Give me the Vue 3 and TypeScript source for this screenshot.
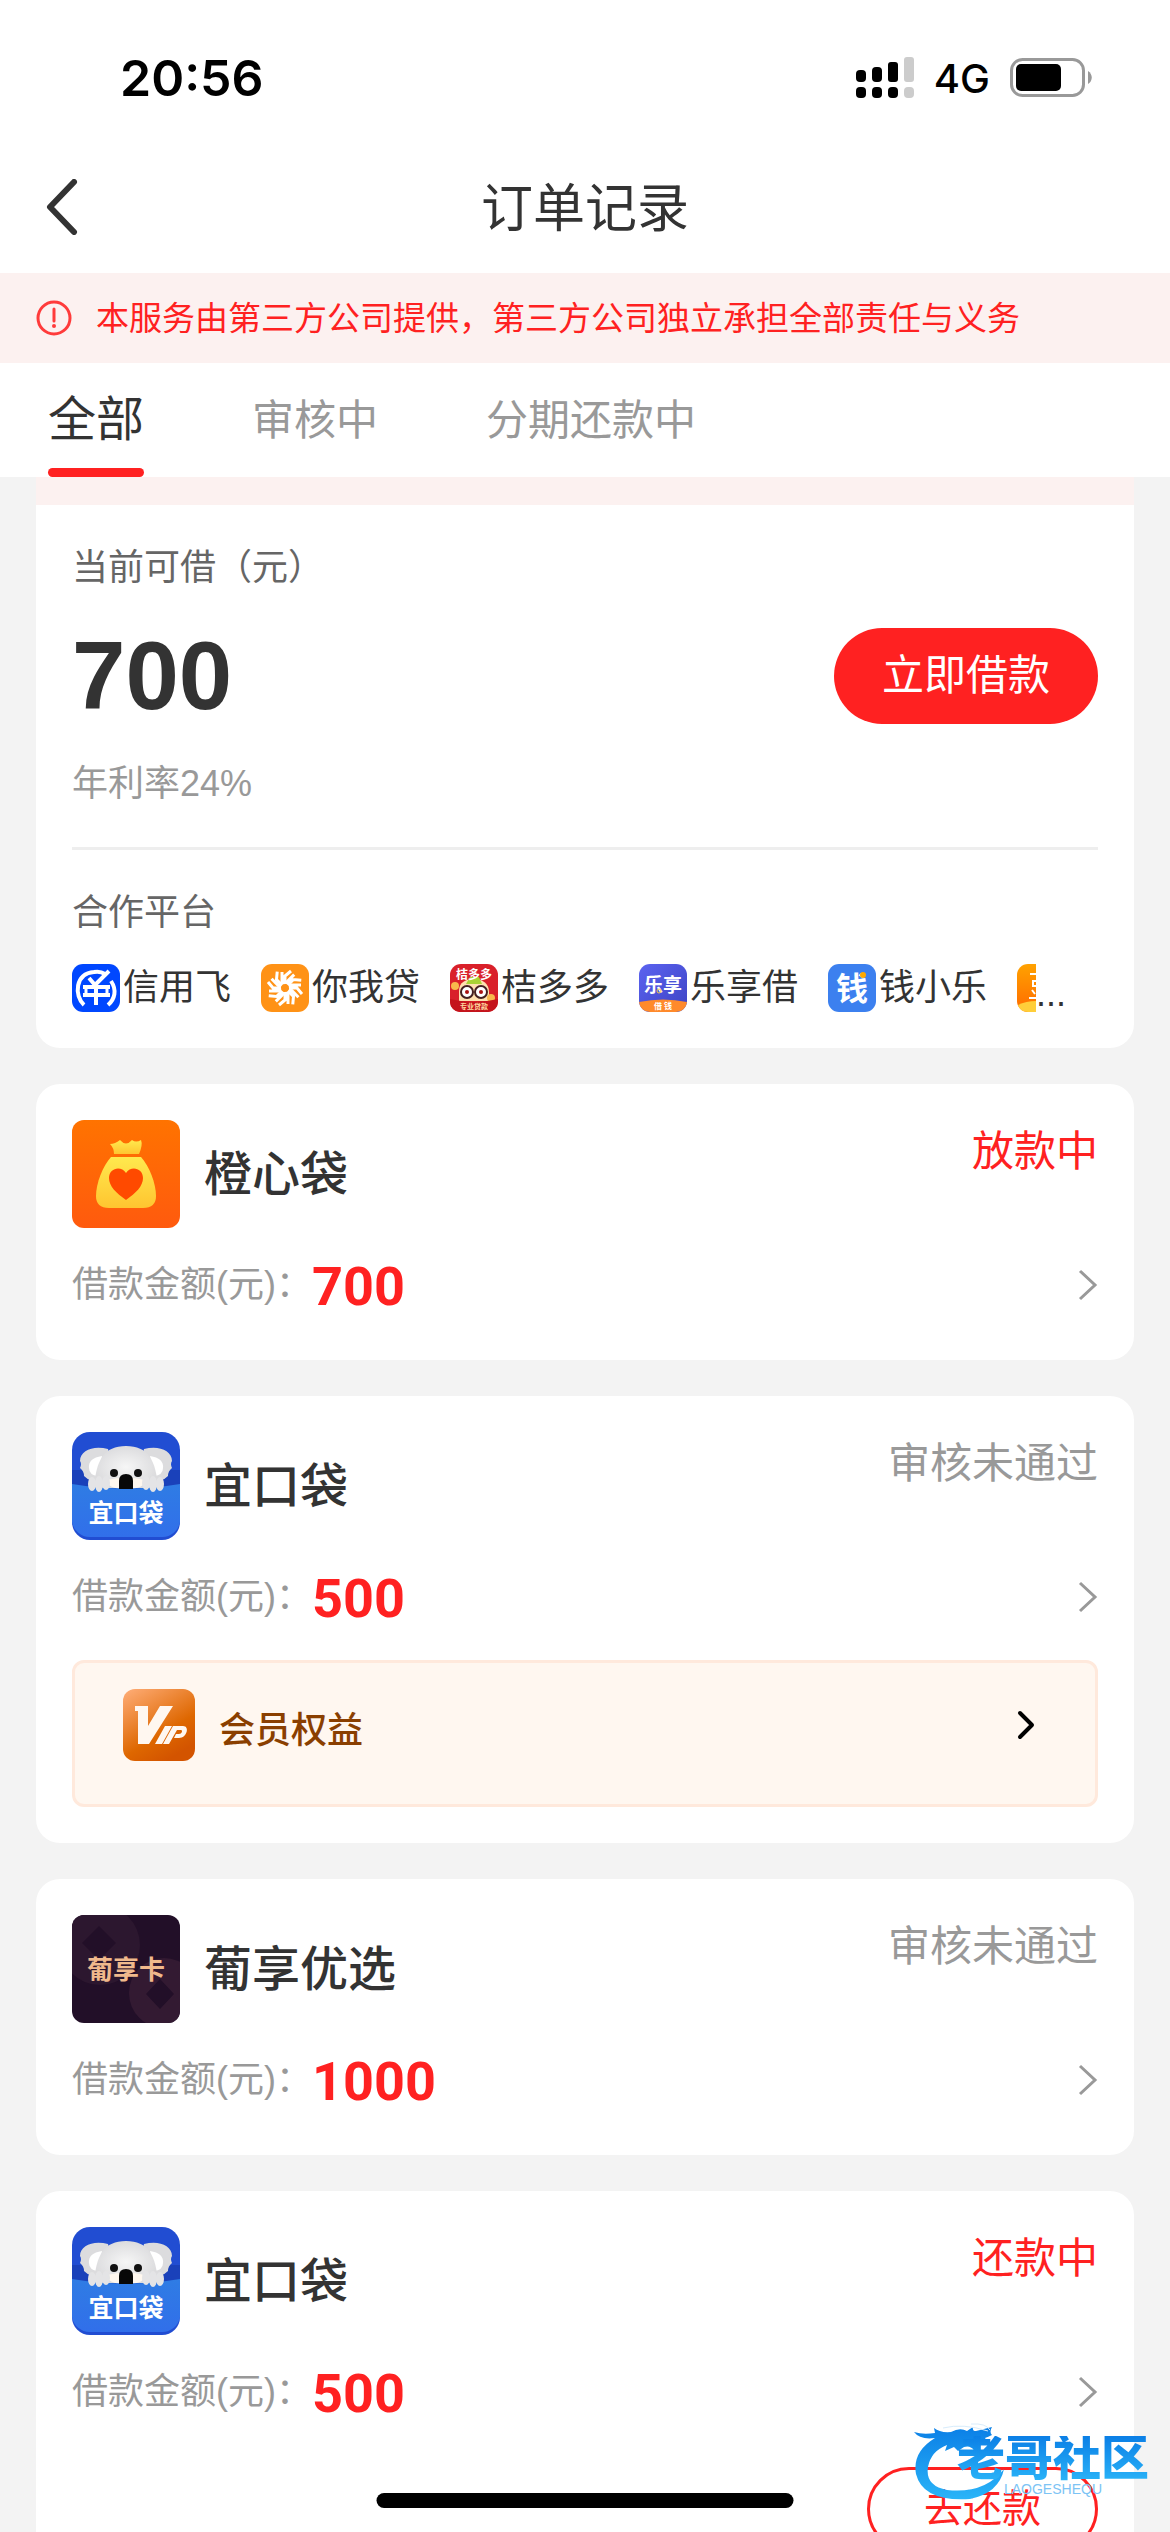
<script setup lang="ts">
import { ref } from 'vue'

type OrderIcon = 'orange' | 'koala' | 'card'

interface Order {
  id: number
  icon: OrderIcon
  name: string
  status: string
  active: boolean
  amount: string
  vip?: boolean
  repay?: boolean
}

interface Partner {
  id: string
  name: string
}

const tabs: string[] = ['全部', '审核中', '分期还款中']
const current = ref<number>(0)

const partners: Partner[] = [
  { id: 'xyf', name: '信用飞' },
  { id: 'nwd', name: '你我贷' },
  { id: 'jdd', name: '桔多多' },
  { id: 'lxj', name: '乐享借' },
  { id: 'qxl', name: '钱小乐' },
]

const orders: Order[] = [
  { id: 1, icon: 'orange', name: '橙心袋', status: '放款中', active: true, amount: '700' },
  { id: 2, icon: 'koala', name: '宜口袋', status: '审核未通过', active: false, amount: '500', vip: true },
  { id: 3, icon: 'card', name: '葡享优选', status: '审核未通过', active: false, amount: '1000' },
  { id: 4, icon: 'koala', name: '宜口袋', status: '还款中', active: true, amount: '500', repay: true },
]

const petals: number[] = [0, 45, 90, 135, 180, 225, 270, 315]
</script>

<template>
  <div class="screen">
    <header class="top">
      <div class="status-bar">
        <span class="time">20:56</span>
        <div class="status-right">
          <svg class="signal" viewBox="0 0 58 42">
            <rect x="0" y="13" width="10" height="12" rx="4" />
            <rect x="16" y="10" width="10" height="15" rx="4" />
            <rect x="32" y="5" width="10" height="20" rx="3" />
            <rect x="48" y="0" width="10" height="25" rx="3" fill="#ccc" />
            <rect x="0" y="30" width="10" height="11" rx="4" />
            <rect x="16" y="30" width="10" height="11" rx="4" />
            <rect x="32" y="30" width="10" height="11" rx="4" />
            <rect x="48" y="30" width="10" height="11" rx="4" fill="#ccc" />
          </svg>
          <span class="network">4G</span>
          <svg class="battery" viewBox="0 0 82 40">
            <rect x="1.5" y="1.5" width="72" height="36" rx="11" fill="none" stroke="#999" stroke-width="3" />
            <rect x="6" y="6" width="45" height="27" rx="5" />
            <path d="M78 13c5 3 5 10 0 13z" fill="#999" />
          </svg>
        </div>
      </div>
      <nav class="nav">
        <button class="back" type="button" aria-label="返回">
          <svg viewBox="0 0 32 56"><path d="M28 3 4 28l24 25" fill="none" stroke="#333" stroke-width="6" stroke-linecap="round" stroke-linejoin="round" /></svg>
        </button>
        <h1>订单记录</h1>
      </nav>
      <p class="notice">
        <svg viewBox="0 0 36 36">
          <circle cx="18" cy="18" r="16" fill="none" stroke="#ff3b3b" stroke-width="3" />
          <path d="M18 9v12" stroke="#ff3b3b" stroke-width="3" stroke-linecap="round" />
          <circle cx="18" cy="26" r="2" fill="#ff3b3b" />
        </svg>
        <span>本服务由第三方公司提供，第三方公司独立承担全部责任与义务</span>
      </p>
      <div class="tabs" role="tablist">
        <button
          v-for="(tab, i) in tabs"
          :key="tab"
          type="button"
          role="tab"
          class="tab"
          :class="{ on: current === i }"
          :aria-selected="current === i"
          @click="current = i"
        >{{ tab }}</button>
      </div>
    </header>

    <main class="list">
      <section class="quota">
        <div class="strip"></div>
        <div class="quota-body">
          <p class="label">当前可借（元）</p>
          <div class="quota-row">
            <strong>700</strong>
            <button class="borrow" type="button">立即借款</button>
          </div>
          <p class="rate">年利率24%</p>
          <hr />
          <p class="label">合作平台</p>
          <ul class="partners">
            <li v-for="p in partners" :key="p.id">
              <svg v-if="p.id === 'xyf'" class="mini" viewBox="0 0 48 48">
                <rect width="48" height="48" rx="11" fill="#0047ff" />
                <path d="M12 41C2 32 3 9 22 8c5-1 8 0 11 2M39 17c6 9 4 18-3 24" fill="none" stroke="#fff" stroke-width="4" />
                <path d="M17 14l6 7L37 7" fill="none" stroke="#fff" stroke-width="4" />
                <path d="M11 23h27M11 31h27M24 20v21" fill="none" stroke="#fff" stroke-width="4" />
                <path d="M14 23v8M35 23v8" fill="none" stroke="#fff" stroke-width="3" />
              </svg>
              <svg v-else-if="p.id === 'nwd'" class="mini" viewBox="0 0 48 48">
                <rect width="48" height="48" rx="11" fill="#ff9216" />
                <g fill="none" stroke="#fff" stroke-width="3">
                  <path v-for="a in petals" :key="a" :transform="`rotate(${a} 24 24)`" d="M21 18V8M24 18v-6l6-5M20 19l8-1" />
                </g>
              </svg>
              <svg v-else-if="p.id === 'jdd'" class="mini" viewBox="0 0 48 48">
                <rect width="48" height="48" rx="11" fill="#d9202a" />
                <path d="M9 37V27C9 18 16 15 24 15s15 4 15 13v9z" fill="#ffe1b0" />
                <path d="M16 20l4-7h9l3 7z" fill="#a9d335" />
                <circle cx="5" cy="22" r="4" fill="#f8b84c" /><circle cx="41" cy="34" r="4" fill="#f8b84c" />
                <circle cx="17" cy="28" r="6" fill="#fff" stroke="#442021" stroke-width="2" />
                <circle cx="31" cy="28" r="6" fill="#fff" stroke="#442021" stroke-width="2" />
                <circle cx="17" cy="28" r="2" fill="#a11" /><circle cx="31" cy="28" r="2" fill="#a11" />
                <path d="M0 35q24 6 48 0v3a10 10 0 0 1-10 10H10A10 10 0 0 1 0 38z" fill="#c4141c" />
                <text x="24" y="15" font-size="12" font-weight="700" fill="#fff" text-anchor="middle">桔多多</text>
                <text x="24" y="45" font-size="7" font-weight="700" fill="#ffd9a0" text-anchor="middle">专业贷款</text>
              </svg>
              <svg v-else-if="p.id === 'lxj'" class="mini" viewBox="0 0 48 48">
                <defs>
                  <linearGradient id="lxj-bg" x2="1" y2="1"><stop stop-color="#5b63f0" /><stop offset="1" stop-color="#3d43c4" /></linearGradient>
                </defs>
                <rect width="48" height="48" rx="11" fill="url(#lxj-bg)" />
                <path d="M0 38q24-5 48 0a11 11 0 0 1-11 10H11A11 11 0 0 1 0 38z" fill="#ff8a2b" />
                <text x="24" y="28" font-size="19" font-weight="700" fill="#fff" text-anchor="middle">乐享</text>
                <text x="24" y="45" font-size="8" font-weight="700" fill="#fff" text-anchor="middle">借 钱</text>
                <circle cx="20" cy="27" r="2" fill="none" stroke="#f7c948" stroke-width="1" />
              </svg>
              <svg v-else class="mini" viewBox="0 0 48 48">
                <rect width="48" height="48" rx="11" fill="#3c80ef" />
                <text x="24" y="36" font-size="32" font-weight="700" fill="#fff" text-anchor="middle">钱</text>
                <circle cx="35" cy="11" r="3" fill="#ffa800" />
              </svg>
              <span>{{ p.name }}</span>
            </li>
            <li class="more">
              <svg class="cut" viewBox="0 0 19 48">
                <defs>
                  <linearGradient id="cut-bg" x2="0" y2="1"><stop stop-color="#ffa200" /><stop offset="1" stop-color="#ff6a00" /></linearGradient>
                </defs>
                <path d="M19 0h-8A11 11 0 0 0 0 11v26a11 11 0 0 0 11 11h8z" fill="url(#cut-bg)" />
                <path d="M1 41q8-4 18-4v11h-8Q3 48 1 41z" fill="#ffce3a" />
                <path d="M13 10h6M19 17h-3v5h3M15 26l3 4M12 34h7" fill="none" stroke="#fff" stroke-width="2" />
              </svg>
              <span class="dots">...</span>
            </li>
          </ul>
        </div>
      </section>

      <article v-for="order in orders" :key="order.id" class="order">
        <div class="order-head">
          <svg v-if="order.icon === 'orange'" class="logo" viewBox="0 0 108 108">
            <defs>
              <linearGradient id="orange-bg" x2="0" y2="1"><stop stop-color="#ff7300" /><stop offset="1" stop-color="#ff5a0e" /></linearGradient>
              <linearGradient id="bag" x2="0" y2="1"><stop stop-color="#ffe94e" /><stop offset="1" stop-color="#ffc530" /></linearGradient>
            </defs>
            <rect width="108" height="108" rx="12" fill="url(#orange-bg)" />
            <path d="M38 24q5 0 10-4 6 7 12 0 4 3 9 0 2 5-2 14H42q0-6-4-10z" fill="url(#bag)" />
            <path d="M39 37h30c8 9 15 26 15 39q0 12-13 12H37q-13 0-13-12c0-13 7-30 15-39z" fill="url(#bag)" />
            <path d="M54 80C44 73 37 66 37 58c0-10 12-13 17-5 5-8 17-5 17 5 0 8-7 15-17 22z" fill="#ff4a00" />
          </svg>
          <svg v-else-if="order.icon === 'koala'" class="logo" viewBox="0 0 108 108">
            <defs>
              <radialGradient id="fur"><stop stop-color="#f6f6f6" /><stop offset="1" stop-color="#dcdcde" /></radialGradient>
              <linearGradient id="pocket" x2="0" y2="1"><stop stop-color="#2f7ce4" /><stop offset="1" stop-color="#316fea" /></linearGradient>
            </defs>
            <rect width="108" height="108" rx="18" fill="#214dd2" />
            <path d="M0 38h108v20H0z" fill="#1a41ba" />
            <path d="M36 17C22 13 8 18 8 29q2 3 0 7 4 3 4 8 6 6 16 6l14-10zM72 17c14-4 28 1 28 12q-2 3 0 7-4 3-4 8-6 6-16 6L66 40z" fill="#dcdcde" />
            <path d="M17 36q-1-10 13-12l-4 20q-9-1-9-8zM91 36q1-10-13-12l4 20q9-1 9-8z" fill="#fff" />
            <path d="M22 56C24 28 32 14 54 14s30 14 32 42z" fill="url(#fur)" />
            <path d="M35 48q19-5 38 0 0 9-19 9t-19-9z" fill="#fff8ef" />
            <path d="M0 52q54 9 108 0v38a18 18 0 0 1-18 15H18A18 18 0 0 1 0 90z" fill="url(#pocket)" />
            <g fill="#e4e4e6">
              <ellipse cx="20" cy="52" rx="4" ry="7" /><ellipse cx="27" cy="52" rx="4" ry="8" /><ellipse cx="34" cy="51" rx="4" ry="7" />
              <ellipse cx="74" cy="51" rx="4" ry="7" /><ellipse cx="81" cy="52" rx="4" ry="8" /><ellipse cx="88" cy="52" rx="4" ry="7" />
            </g>
            <circle cx="42" cy="41" r="4" fill="#111" /><circle cx="66" cy="41" r="4" fill="#111" />
            <path d="M47 57V49q0-7 7-7t7 7v8z" fill="#080808" />
            <text x="54" y="90" font-size="25" font-weight="700" fill="#fff" text-anchor="middle">宜口袋</text>
          </svg>
          <svg v-else class="logo" viewBox="0 0 108 108">
            <defs>
              <clipPath id="card-clip"><rect width="108" height="108" rx="12" /></clipPath>
            </defs>
            <g clip-path="url(#card-clip)">
              <rect width="108" height="108" fill="#220f28" />
              <circle cx="28" cy="30" r="40" fill="#2c172f" />
              <circle cx="92" cy="78" r="35" fill="#331a32" />
              <path d="M27 11l17 17-17 17-17-17zM88 64l14 15-14 15-14-15z" fill="#220f28" />
            </g>
            <text x="54" y="64" font-size="26" font-weight="700" fill="#f0b98c" text-anchor="middle">葡享卡</text>
          </svg>
          <h2>{{ order.name }}</h2>
          <span class="status" :class="{ active: order.active }">{{ order.status }}</span>
        </div>
        <a class="amount" href="#">
          <span class="amount-label">借款金额(元)：</span>
          <b>{{ order.amount }}</b>
          <svg viewBox="0 0 20 32"><path d="M2 2l15 14L2 30" fill="none" stroke="#999" stroke-width="3" /></svg>
        </a>
        <a v-if="order.vip" class="vip" href="#">
          <svg class="vip-icon" viewBox="0 0 72 72">
            <defs>
              <linearGradient id="vip-bg" x2="0.6" y2="1"><stop stop-color="#ffae79" /><stop offset="0.7" stop-color="#de6700" /><stop offset="1" stop-color="#d35400" /></linearGradient>
            </defs>
            <rect width="72" height="72" rx="12" fill="url(#vip-bg)" />
            <path d="M12 17h13v20l12-20h13L26 55H15V22h-3z" fill="#fff7f0" />
            <path d="M42 37h7L39 55h-7zM50 37h10c7 0 4 12-4 12h-5l2-4h3c3 0 4-4 2-4h-4l-8 14h-6z" fill="#fff7f0" />
          </svg>
          <span>会员权益</span>
          <svg class="vip-arrow" viewBox="0 0 18 30"><path d="M3 3l12 12L3 27" fill="none" stroke="#000" stroke-width="4" stroke-linecap="round" stroke-linejoin="round" /></svg>
        </a>
        <div v-if="order.repay" class="actions">
          <button type="button" class="repay">去还款</button>
        </div>
      </article>
    </main>

    <div class="watermark">
      <svg viewBox="0 0 98 80">
        <defs>
          <linearGradient id="dragon" x2="0" y2="1"><stop stop-color="#0b7fe6" /><stop offset="1" stop-color="#2ab4f8" /></linearGradient>
        </defs>
        <path d="M1 10q9 3 21 1l-1-5q6 5 17 4 9-5 16-1l6-4q-1 4 3 4l16-4q-3 5 0 8-4 2-7 3l4 6q-6 2-12 0l-3 6q-4-5-10-3l-6 4-4-4-9 4 2-6Q18 29 15 45q-3 19 19 23 38 4 57-21-5 24-34 30Q10 80 3 52-1 30 22 16 7 18 1 10z" fill="url(#dragon)" />
        <path d="M30 6q20-5 45 3M58 2q15-1 19 6" fill="none" stroke="#d8ecfb" stroke-width="1" />
      </svg>
      <div class="watermark-text">
        <span class="brand">老哥社区</span>
        <span class="latin">LAOGESHEQU</span>
      </div>
    </div>
    <div class="home-indicator"></div>
  </div>
</template>

<style>
body {
  margin: 0;
  background: #f3f3f3;
}
</style>

<style scoped>
.screen {
  position: relative;
  height: 100vh;
  overflow: hidden;
  background: #f3f3f3;
  color: #333;
  font-family: "Liberation Sans", "Noto Sans CJK SC", sans-serif;
  font-size: 36px;
}
.screen * {
  box-sizing: border-box;
}
svg {
  display: block;
  flex: none;
}
svg text {
  font-family: "Noto Sans CJK SC", sans-serif;
}
p, h1, h2, ul {
  margin: 0;
  padding: 0;
  font-weight: 400;
}
button {
  border: 0;
  padding: 0;
  background: none;
  color: inherit;
  font-family: inherit;
}
a {
  color: inherit;
  text-decoration: none;
}
.top {
  background: #fff;
}
.status-bar {
  display: flex;
  align-items: center;
  justify-content: space-between;
  height: 141px;
  padding: 15px 78px 0 120px;
  color: #000;
  font-family: Inter, sans-serif;
}
.time {
  font-size: 50px;
  font-weight: 600;
}
.status-right {
  display: flex;
  align-items: center;
  gap: 20px;
}
.signal {
  width: 58px;
  height: 42px;
}
.network {
  font-size: 40px;
  font-weight: 500;
}
.battery {
  width: 82px;
  height: 40px;
}
.nav {
  display: grid;
  grid-template-columns: 1fr auto 1fr;
  align-items: center;
  height: 132px;
  padding: 0 46px;
}
.back {
  justify-self: start;
}
.back svg {
  width: 32px;
  height: 56px;
}
.nav h1 {
  padding-top: 4px;
  font-size: 52px;
  line-height: 72px;
}
.notice {
  display: flex;
  align-items: center;
  gap: 24px;
  height: 90px;
  padding: 0 36px;
  background: #fcf1f0;
  color: #ff2121;
  font-size: 33px;
  line-height: 48px;
}
.notice span {
  padding-top: 2px;
}
.notice svg {
  width: 36px;
  height: 36px;
}
.tabs {
  display: flex;
  gap: 108px;
  height: 114px;
  padding: 0 48px;
}
.tab {
  display: flex;
  flex-direction: column;
  justify-content: space-between;
  padding-top: 24px;
  color: #999;
  font-size: 42px;
  line-height: 68px;
}
.tab.on {
  color: #333;
  font-size: 48px;
  line-height: 66px;
}
.tab.on::after {
  content: "";
  width: 100%;
  height: 9px;
  border-radius: 5px;
  background: #ff2121;
}
.list {
  display: flex;
  flex-direction: column;
  gap: 36px;
  padding: 0 36px;
}
.quota {
  border-radius: 0 0 24px 24px;
  background: #fff;
}
.strip {
  height: 28px;
  background: #fcf1f0;
}
.quota-body {
  padding: 36px;
}
.label {
  color: #666;
  line-height: 54px;
}
.quota-row {
  display: flex;
  align-items: center;
  justify-content: space-between;
  height: 96px;
  margin-top: 33px;
}
.quota-row strong {
  font-size: 96px;
  line-height: 96px;
}
.borrow {
  width: 264px;
  height: 96px;
  border-radius: 48px;
  background: #ff2121;
  color: #fff;
  font-size: 42px;
  line-height: 96px;
}
.rate {
  margin-top: 33px;
  color: #999;
  line-height: 54px;
}
hr {
  height: 3px;
  margin: 36px 0;
  border: 0;
  background: #eee;
}
.partners {
  display: flex;
  gap: 30px;
  margin-top: 24px;
  list-style: none;
}
.partners li {
  display: flex;
  flex: none;
  align-items: center;
  gap: 3px;
  height: 48px;
  line-height: 48px;
}
.mini {
  width: 48px;
  height: 48px;
}
.cut {
  width: 19px;
  height: 48px;
}
.partners .more {
  gap: 0;
  align-items: flex-end;
}
.dots {
  line-height: 36px;
}
.order {
  padding: 36px 36px 18px;
  border-radius: 24px;
  background: #fff;
}
.order-head {
  display: flex;
  align-items: center;
  gap: 24px;
}
.logo {
  width: 108px;
  height: 108px;
}
.order h2 {
  flex: 1;
  padding-top: 2px;
  font-size: 48px;
  font-weight: 500;
  line-height: 72px;
}
.status {
  align-self: flex-start;
  color: #999;
  font-size: 42px;
  line-height: 64px;
}
.status.active {
  color: #ff2121;
}
.amount {
  display: flex;
  align-items: center;
  height: 114px;
}
.amount-label {
  color: #999;
  line-height: 54px;
}
.amount b {
  flex: 1;
  padding-top: 2px;
  color: #ff2121;
  font-family: Roboto, sans-serif;
  font-size: 54px;
  font-weight: 700;
}
.amount svg {
  width: 20px;
  height: 32px;
}
.vip {
  display: flex;
  align-items: center;
  gap: 24px;
  height: 147px;
  margin: 6px 0 18px;
  padding: 0 60px 18px 48px;
  border: 3px solid #ffe9dc;
  border-radius: 12px;
  background: #fff7f0;
  color: #8a3f00;
  font-weight: 500;
}
.vip-icon {
  width: 72px;
  height: 72px;
}
.vip span {
  flex: 1;
  padding-top: 12px;
  line-height: 54px;
}
.vip-arrow {
  width: 18px;
  height: 30px;
}
.actions {
  display: flex;
  justify-content: flex-end;
  margin: 18px 0;
}
.repay {
  width: 231px;
  height: 84px;
  border: 3px solid #ff2121;
  border-radius: 42px;
  color: #ff2121;
  font-size: 39px;
  line-height: 78px;
}
.watermark {
  position: absolute;
  right: 21px;
  bottom: 30px;
  display: flex;
  align-items: flex-end;
}
.watermark > svg {
  width: 98px;
  height: 80px;
  margin-right: -54px;
}
.watermark-text {
  display: flex;
  flex-direction: column;
  align-items: center;
  padding-bottom: 6px;
}
.brand {
  background: linear-gradient(#0b7fe6, #2ab4f8);
  background-clip: text;
  color: transparent;
  font-size: 48px;
  font-weight: 900;
  line-height: 46px;
}
.latin {
  color: #7cc4f5;
  font-size: 14px;
  line-height: 14px;
}
.home-indicator {
  position: absolute;
  bottom: 24px;
  left: 50%;
  width: 417px;
  height: 15px;
  border-radius: 8px;
  background: #000;
  transform: translateX(-50%);
}
</style>
